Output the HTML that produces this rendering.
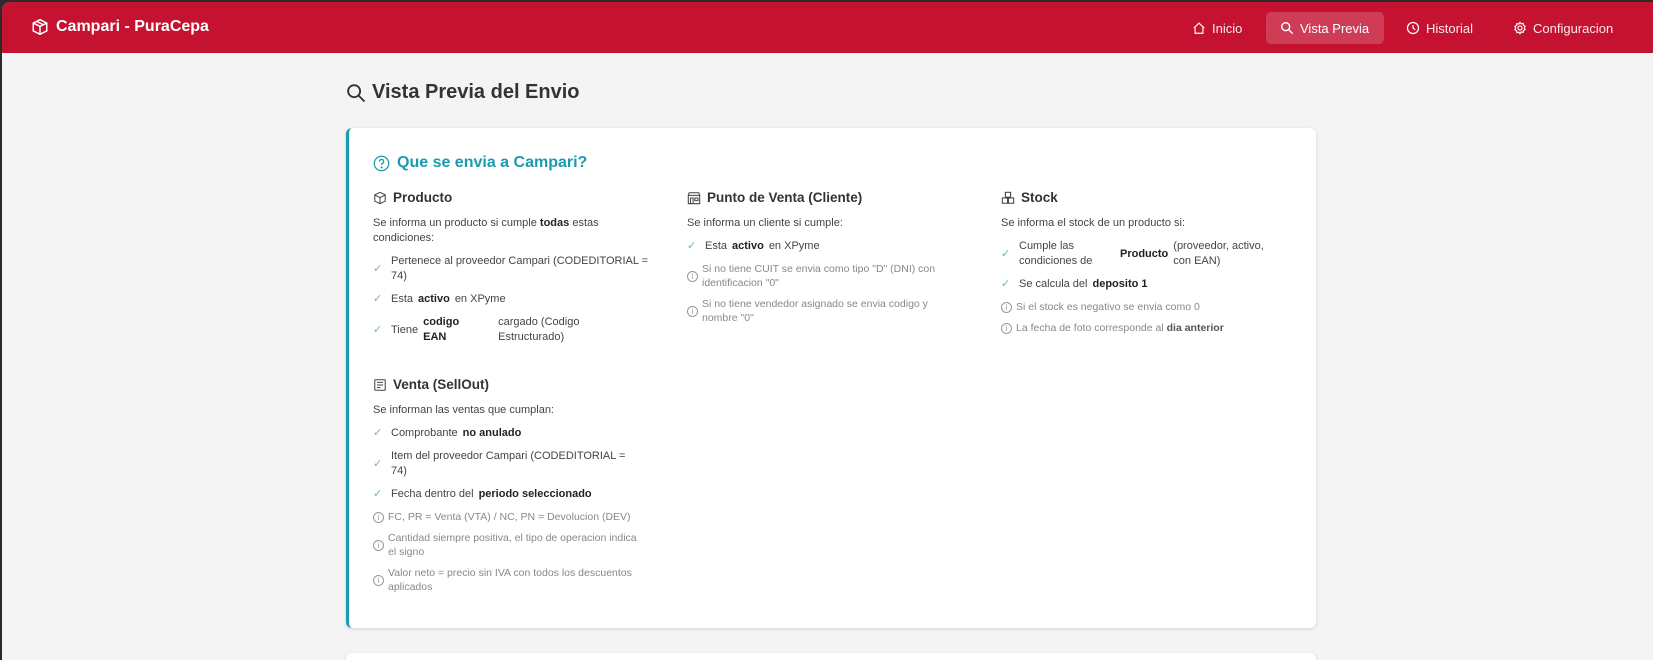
<!DOCTYPE html>
<html><head><meta charset="utf-8">
<style>
*{box-sizing:border-box;margin:0;padding:0}
html,body{width:1653px;height:660px;overflow:hidden}
body{background:#2b2b2b;font-family:"Liberation Sans",sans-serif;color:#333}
.win{position:absolute;left:2px;top:2px;right:0;bottom:0;background:#f4f4f4;border-top-left-radius:8px;overflow:hidden}
.nav{position:absolute;left:0;top:0;right:0;height:51px;background:#c41230;color:#fff}
.brand{position:absolute;left:29px;top:16px;font-size:16px;font-weight:bold;display:flex;align-items:center;gap:7px}
.nav .it{position:absolute;top:10px;height:32px;display:flex;align-items:center;gap:6px;font-size:13px;color:#fbe9ec;border-radius:5px;white-space:nowrap}
.nav .act{background:rgba(255,255,255,.18);color:#fff;padding:0 14px}
svg{flex:none}
h1{position:absolute;left:344px;top:79px;font-size:20px;font-weight:bold;color:#333;display:flex;align-items:center;gap:6px}
.card{position:absolute;left:344px;top:126px;width:970px;height:500px;background:#fff;border-radius:6px;border-left:3px solid #1a9bb0;box-shadow:0 1px 3px rgba(0,0,0,.15)}
.card2{position:absolute;left:344px;top:651px;width:970px;height:40px;background:#fff;border-radius:6px;box-shadow:0 1px 3px rgba(0,0,0,.15)}
.ch{position:absolute;left:24px;top:26px;font-size:16px;font-weight:bold;color:#1a9bb0;display:flex;align-items:center;gap:7px}
.col{position:absolute;width:282px;font-size:11px;line-height:15px;color:#444}
.col h3{font-size:13.5px;font-weight:bold;color:#333;display:flex;align-items:center;gap:6px;margin-bottom:11px}
.col p{margin-bottom:8px}
.li{display:flex;align-items:center;gap:6px;margin-bottom:8px}
.li .ck{color:#6cbf7a;font-size:11px;width:12px;flex:none}
.li .g{display:flex;gap:5px;align-items:center}
.inf{display:flex;align-items:center;gap:4px;color:#888;font-size:10.5px;line-height:14px;margin-bottom:7px}
.inf .i{flex:none;width:11px;height:11px;border:1px solid #999;border-radius:50%;font-size:8px;line-height:9px;text-align:center;color:#999;font-style:normal}
b{color:#222}
</style></head><body>
<div class="win">
<div class="nav">
 <div class="brand"><svg width="18" height="18" viewBox="0 0 16 16" fill="none" stroke="#fff" stroke-width="1.3"><path d="M8 1.5l6 3v7l-6 3-6-3v-7z M2 4.5l6 3 6-3 M8 7.5v7 M5 3l6 3"/></svg>Campari - PuraCepa</div>
 <div class="it" style="left:1190px"><svg width="14" height="14" viewBox="0 0 16 16" fill="none" stroke="#fff" stroke-width="1.3"><path d="M2 8l6-5.5 6 5.5M3.5 7v7h9V7"/></svg>Inicio</div>
 <div class="it act" style="left:1264px;width:118px"><svg width="14" height="14" viewBox="0 0 16 16" fill="none" stroke="#fff" stroke-width="1.6"><circle cx="6.5" cy="6.5" r="4.5"/><path d="M10 10l4.5 4.5"/></svg>Vista Previa</div>
 <div class="it" style="left:1404px"><svg width="14" height="14" viewBox="0 0 16 16" fill="none" stroke="#fff" stroke-width="1.4"><circle cx="8" cy="8" r="6.3"/><path d="M8 4.5V8l2.5 2"/></svg>Historial</div>
 <div class="it" style="left:1511px"><svg width="14" height="14" viewBox="0 0 16 16" fill="none" stroke="#fff" stroke-width="1.3"><circle cx="8" cy="8" r="2.3"/><path d="M8 1.5l1.3 1.8 2.2-.6.4 2.2 2 1-1 2 1 2-2 1-.4 2.2-2.2-.6L8 14.5l-1.3-1.8-2.2.6-.4-2.2-2-1 1-2-1-2 2-1 .4-2.2 2.2.6z"/></svg>Configuracion</div>
</div>
<h1><svg width="20" height="20" viewBox="0 0 16 16" fill="none" stroke="#333" stroke-width="1.5"><circle cx="6.5" cy="6.5" r="4.8"/><path d="M10 10l4.8 4.8"/></svg>Vista Previa del Envio</h1>
<div class="card">
 <div class="ch"><svg width="17" height="17" viewBox="0 0 16 16" fill="none" stroke="#1a9bb0" stroke-width="1.2"><circle cx="8" cy="8" r="6.8"/><path d="M6 6.2a2 2 0 1 1 2.8 1.8c-.6.3-.8.7-.8 1.4"/><circle cx="8" cy="11.6" r=".4" fill="#1a9bb0"/></svg>Que se envia a Campari?</div>
 <div class="col" style="left:24px;top:62px">
  <h3><svg width="14" height="14" viewBox="0 0 16 16" fill="none" stroke="#444" stroke-width="1.2"><path d="M8 1.5l6 3v7l-6 3-6-3v-7z M2 4.5l6 3 6-3 M8 7.5v7"/></svg>Producto</h3>
  <p style="width:250px">Se informa un producto si cumple <b>todas</b> estas condiciones:</p>
  <div class="li"><span class="ck">✓</span><span>Pertenece al proveedor Campari (CODEDITORIAL = 74)</span></div>
  <div class="li"><span class="ck">✓</span><span class="g"><span>Esta</span><b>activo</b><span>en XPyme</span></span></div>
  <div class="li"><span class="ck">✓</span><span class="g"><span>Tiene</span><b style="width:70px;flex:none;padding-right:22px">codigo EAN</b><span style="width:110px">cargado (Codigo Estructurado)</span></span></div>
  <h3 style="margin-top:32px"><svg width="14" height="14" viewBox="0 0 16 16" fill="none" stroke="#444" stroke-width="1.2"><rect x="2" y="2" width="12" height="12" rx="1"/><path d="M4.5 5h7M4.5 8h7M4.5 11h4"/></svg>Venta (SellOut)</h3>
  <p>Se informan las ventas que cumplan:</p>
  <div class="li"><span class="ck">✓</span><span class="g"><span>Comprobante</span><b>no anulado</b></span></div>
  <div class="li"><span class="ck">✓</span><span style="width:245px">Item del proveedor Campari (CODEDITORIAL = 74)</span></div>
  <div class="li"><span class="ck">✓</span><span class="g"><span>Fecha dentro del</span><b>periodo seleccionado</b></span></div>
  <div class="inf"><i class="i">i</i><span>FC, PR = Venta (VTA) / NC, PN = Devolucion (DEV)</span></div>
  <div class="inf"><i class="i">i</i><span style="width:250px">Cantidad siempre positiva, el tipo de operacion indica el signo</span></div>
  <div class="inf"><i class="i">i</i><span>Valor neto = precio sin IVA con todos los descuentos aplicados</span></div>
 </div>
 <div class="col" style="left:338px;top:62px">
  <h3><svg width="14" height="14" viewBox="0 0 16 16" fill="none" stroke="#444" stroke-width="1.2"><path d="M1.5 5h13v9.5h-13z M2.5 2h11l1 3h-13z M4 8h3v6.5H4z M9 8h3.5v3H9z"/></svg>Punto de Venta (Cliente)</h3>
  <p>Se informa un cliente si cumple:</p>
  <div class="li"><span class="ck">✓</span><span class="g"><span>Esta</span><b>activo</b><span>en XPyme</span></span></div>
  <div class="inf"><i class="i">i</i><span>Si no tiene CUIT se envia como tipo "D" (DNI) con identificacion "0"</span></div>
  <div class="inf"><i class="i">i</i><span style="width:245px">Si no tiene vendedor asignado se envia codigo y nombre "0"</span></div>
 </div>
 <div class="col" style="left:652px;top:62px">
  <h3><svg width="14" height="14" viewBox="0 0 16 16" fill="none" stroke="#444" stroke-width="1.2"><rect x="5" y="1.5" width="6" height="5.5"/><rect x="1.5" y="8" width="6" height="6"/><rect x="8.5" y="8" width="6" height="6"/></svg>Stock</h3>
  <p>Se informa el stock de un producto si:</p>
  <div class="li"><span class="ck">✓</span><span class="g"><span style="width:96px">Cumple las condiciones de</span><b>Producto</b><span style="width:110px">(proveedor, activo, con EAN)</span></span></div>
  <div class="li"><span class="ck">✓</span><span class="g"><span>Se calcula del</span><b>deposito 1</b></span></div>
  <div class="inf"><i class="i">i</i><span>Si el stock es negativo se envia como 0</span></div>
  <div class="inf"><i class="i">i</i><span>La fecha de foto corresponde al <b style="color:#555">dia anterior</b></span></div>
 </div>
</div>
<div class="card2"></div>
</div>
</body></html>
